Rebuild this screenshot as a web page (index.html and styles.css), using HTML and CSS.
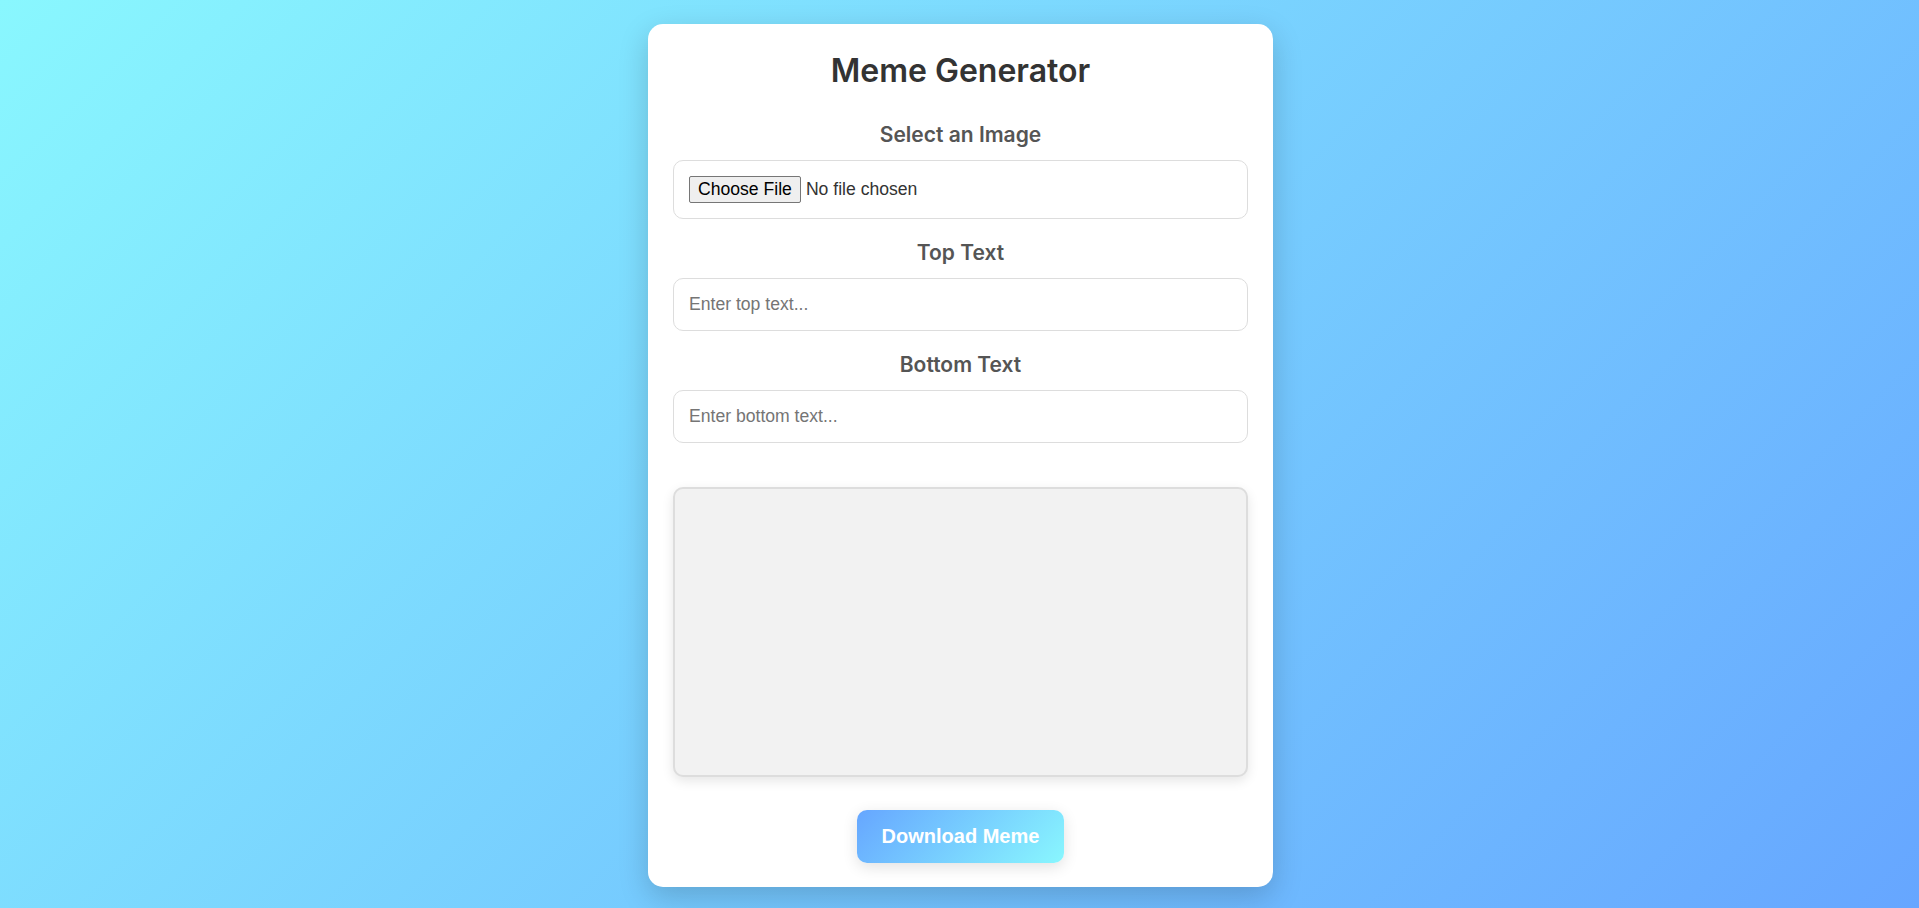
FILE: index.html
```html
<!DOCTYPE html>
<html lang="en">
<head>
<meta charset="UTF-8">
<title>Meme Generator</title>
<link rel="stylesheet" href="styles.css">
</head>
<body>
<main class="card">
  <h1 class="title">Meme Generator</h1>
  <div class="field">
    <label class="label" for="image">Select an Image</label>
    <input class="control file" id="image" type="file" accept="image/*">
  </div>
  <div class="field">
    <label class="label" for="top">Top Text</label>
    <input class="control" id="top" type="text" placeholder="Enter top text...">
  </div>
  <div class="field">
    <label class="label" for="bottom">Bottom Text</label>
    <input class="control" id="bottom" type="text" placeholder="Enter bottom text...">
  </div>
  <div class="preview"></div>
  <div class="actions">
    <button class="download" type="button">Download Meme</button>
  </div>
</main>
</body>
</html>
```

FILE: styles.css
```css
* {
  box-sizing: border-box;
}

html, body {
  margin: 0;
  padding: 0;
}

body {
  min-height: 100vh;
  background: linear-gradient(135deg, #89f7fe 0%, #66a6ff 100%);
  font-family: "Inter", "Noto Sans", sans-serif;
  display: flex;
  flex-direction: column;
  align-items: center;
  padding-top: 24px;
  padding-left: 2px;
}

.card {
  width: 625px;
  background: #fff;
  border-radius: 15px;
  padding: 25px 25px 24px;
  box-shadow: 0 10px 30px rgba(0, 0, 0, 0.18);
  display: flex;
  flex-direction: column;
}

.title {
  margin: 0 0 30px;
  font-size: 32px;
  line-height: 44px;
  font-weight: 600;
  color: #333;
  text-align: center;
}

.field {
  display: flex;
  flex-direction: column;
  margin-bottom: 22px;
}

.label {
  display: block;
  font-size: 21px;
  line-height: 24px;
  font-weight: 600;
  color: #555;
  text-align: center;
  margin-bottom: 13px;
}

.control {
  width: 100%;
  font-family: "Liberation Sans", Arial, sans-serif;
  font-size: 17.6px;
  padding: 15px;
  border: 1px solid #ddd;
  border-radius: 10px;
  color: #333;
  background: #fff;
  outline: none;
}

.control::placeholder {
  color: #757575;
}

.file {
  line-height: 27px;
}

.file::file-selector-button {
  font-family: "Liberation Sans", Arial, sans-serif;
  font-size: 17.6px;
  color: #000;
  background: #efefef;
  border: 1px solid #767676;
  border-radius: 2px;
  padding: 2px 8px;
  margin-right: 5px;
  height: 27px;
  line-height: 21px;
}

.preview {
  margin-top: 22px;
  height: 290px;
  background: #f2f2f2;
  border: 2px solid #ddd;
  border-radius: 10px;
  box-shadow: 0 4px 12px rgba(0, 0, 0, 0.1);
}

.actions {
  display: flex;
  justify-content: center;
  margin-top: 33px;
}

.download {
  font-family: "Liberation Sans", Arial, sans-serif;
  font-size: 20px;
  font-weight: 700;
  color: #fff;
  padding: 15px 25px;
  line-height: 23px;
  border: none;
  border-radius: 10px;
  background: linear-gradient(135deg, #66a6ff 0%, #89f7fe 100%);
  box-shadow: 0 4px 15px rgba(0, 0, 0, 0.12);
  cursor: pointer;
}
```
